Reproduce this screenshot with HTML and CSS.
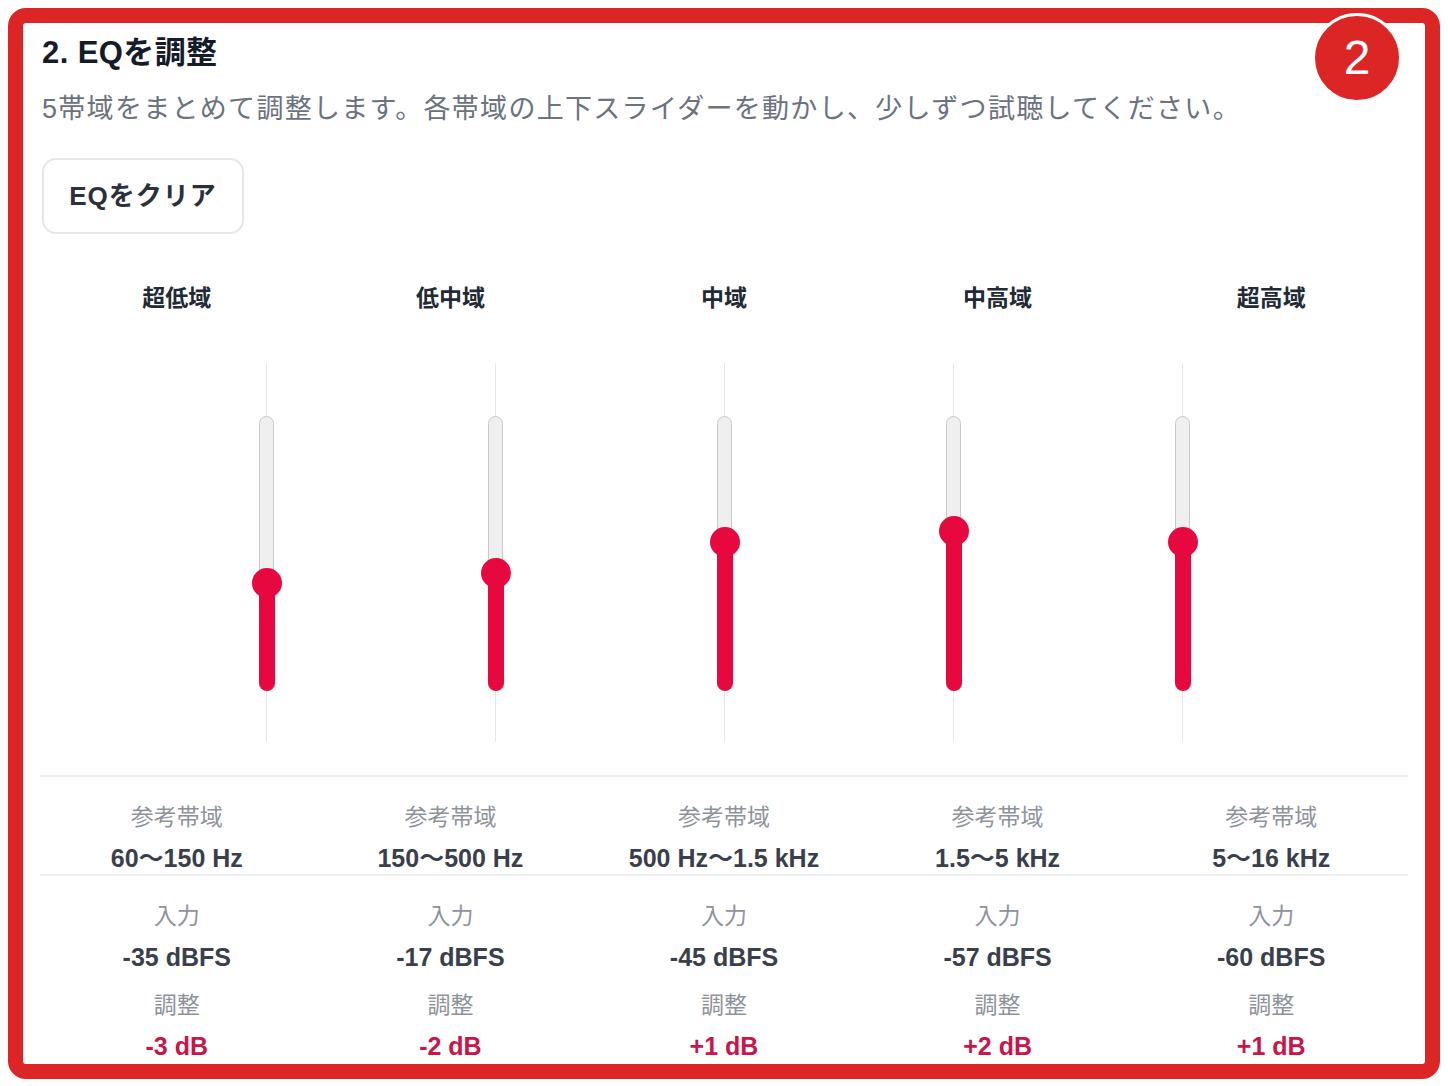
FILE: index.html
```html
<!DOCTYPE html>
<html lang="ja">
<head>
<meta charset="utf-8">
<title>EQを調整</title>
<link rel="stylesheet" href="styles.css">
</head>
<body>
<div class="frame">
  <div class="badge">2</div>
  <h2 class="title">2. EQを調整</h2>
  <p class="desc">5帯域をまとめて調整します。各帯域の上下スライダーを動かし、少しずつ試聴してください。</p>
  <button class="clear-btn">EQをクリア</button>

  <div class="bands">
    <div class="band-name">超低域</div>
    <div class="band-name">低中域</div>
    <div class="band-name">中域</div>
    <div class="band-name">中高域</div>
    <div class="band-name">超高域</div>
  </div>

  <div class="sliders">
    <div class="slider">
      <div class="guide top"></div>
      <div class="track">
        <div class="fill" style="height:106px"></div>
        <div class="thumb" style="bottom:91px"></div>
      </div>
      <div class="guide bottom"></div>
    </div>
    <div class="slider">
      <div class="guide top"></div>
      <div class="track">
        <div class="fill" style="height:116px"></div>
        <div class="thumb" style="bottom:101px"></div>
      </div>
      <div class="guide bottom"></div>
    </div>
    <div class="slider">
      <div class="guide top"></div>
      <div class="track">
        <div class="fill" style="height:147px"></div>
        <div class="thumb" style="bottom:132px"></div>
      </div>
      <div class="guide bottom"></div>
    </div>
    <div class="slider">
      <div class="guide top"></div>
      <div class="track">
        <div class="fill" style="height:158px"></div>
        <div class="thumb" style="bottom:143px"></div>
      </div>
      <div class="guide bottom"></div>
    </div>
    <div class="slider">
      <div class="guide top"></div>
      <div class="track">
        <div class="fill" style="height:147px"></div>
        <div class="thumb" style="bottom:132px"></div>
      </div>
      <div class="guide bottom"></div>
    </div>
  </div>

  <div class="info ref">
    <div class="cell"><span class="lbl">参考帯域</span><span class="val">60〜150 Hz</span></div>
    <div class="cell"><span class="lbl">参考帯域</span><span class="val">150〜500 Hz</span></div>
    <div class="cell"><span class="lbl">参考帯域</span><span class="val">500 Hz〜1.5 kHz</span></div>
    <div class="cell"><span class="lbl">参考帯域</span><span class="val">1.5〜5 kHz</span></div>
    <div class="cell"><span class="lbl">参考帯域</span><span class="val">5〜16 kHz</span></div>
  </div>

  <div class="info levels">
    <div class="cell"><span class="lbl">入力</span><span class="val">-35 dBFS</span><span class="lbl gap">調整</span><span class="val adj">-3 dB</span></div>
    <div class="cell"><span class="lbl">入力</span><span class="val">-17 dBFS</span><span class="lbl gap">調整</span><span class="val adj">-2 dB</span></div>
    <div class="cell"><span class="lbl">入力</span><span class="val">-45 dBFS</span><span class="lbl gap">調整</span><span class="val adj">+1 dB</span></div>
    <div class="cell"><span class="lbl">入力</span><span class="val">-57 dBFS</span><span class="lbl gap">調整</span><span class="val adj">+2 dB</span></div>
    <div class="cell"><span class="lbl">入力</span><span class="val">-60 dBFS</span><span class="lbl gap">調整</span><span class="val adj">+1 dB</span></div>
  </div>
</div>
</body>
</html>
```

FILE: styles.css
```css
html, body {
  margin: 0;
  padding: 0;
  background: #ffffff;
}

body {
  padding: 8px;
  font-family: "Liberation Sans", "Noto Sans CJK JP", sans-serif;
  color: #1f2937;
}

.frame {
  position: relative;
  box-sizing: border-box;
  height: 1071px;
  border: 15px solid #dc2626;
  border-radius: 18px;
  padding: 12px 17px 0;
  background: #ffffff;
}

.badge {
  position: absolute;
  top: -10px;
  right: 23px;
  width: 84px;
  height: 84px;
  border: 3px solid #ffffff;
  border-radius: 50%;
  background: #dc2626;
  color: #ffffff;
  font-family: "Liberation Sans", sans-serif;
  font-size: 48px;
  line-height: 84px;
  text-align: center;
}

.title {
  margin: 0 0 0 2px;
  font-size: 31px;
  line-height: 36px;
  font-weight: 700;
  letter-spacing: 0.4px;
  color: #151b28;
}

.desc {
  margin: 20px 0 0 2px;
  font-size: 27px;
  line-height: 36px;
  letter-spacing: 1.3px;
  color: #6b7280;
}

.clear-btn {
  display: block;
  margin: 31px 0 0 2px;
  box-sizing: border-box;
  width: 202px;
  height: 76px;
  border: 2px solid #e5e7eb;
  border-radius: 14px;
  background: #ffffff;
  font-family: "Liberation Sans", "Noto Sans CJK JP", sans-serif;
  font-size: 26px;
  line-height: 30px;
  font-weight: 700;
  letter-spacing: 1px;
  color: #2b313c;
  padding: 0 0 1px;
}

.bands {
  display: grid;
  grid-template-columns: repeat(5, 1fr);
  margin-top: 49px;
}

.band-name {
  text-align: center;
  font-size: 23px;
  line-height: 30px;
  font-weight: 700;
  color: #222a36;
}

.sliders {
  display: grid;
  grid-template-columns: repeat(5, 229px);
  justify-content: center;
  margin-top: 50px;
  margin-left: 1px;
}

.slider {
  display: flex;
  flex-direction: column;
  align-items: center;
}

.guide {
  width: 1px;
  background: #e6e6e6;
}

.guide.top { height: 53px; }
.guide.bottom { height: 52px; }

.track {
  position: relative;
  box-sizing: border-box;
  width: 15px;
  height: 274px;
  border: 1.5px solid #c9c9c9;
  border-radius: 8px;
  background: #efefef;
}

.fill {
  position: absolute;
  left: -1.5px;
  right: -1.5px;
  bottom: -1.5px;
  background: #e6083e;
  border-radius: 0 0 8px 8px;
}

.thumb {
  position: absolute;
  left: 50%;
  width: 30px;
  height: 30px;
  margin-left: -15px;
  border-radius: 50%;
  background: #e6083e;
}

.info {
  display: grid;
  grid-template-columns: repeat(5, 1fr);
  border-top: 2px solid #eceef1;
}

.info.ref {
  margin-top: 33px;
  padding: 24px 0 0;
}

.info.levels {
  padding-top: 24px;
}

.cell {
  display: flex;
  flex-direction: column;
  align-items: center;
}

.lbl {
  font-size: 23px;
  line-height: 32px;
  color: #8e939b;
}

.lbl.gap { margin-top: 16px; }

.val {
  margin-top: 9px;
  font-size: 25px;
  line-height: 32px;
  font-weight: 700;
  color: #3a404b;
}

.val.adj {
  color: #c8164a;
}
```
